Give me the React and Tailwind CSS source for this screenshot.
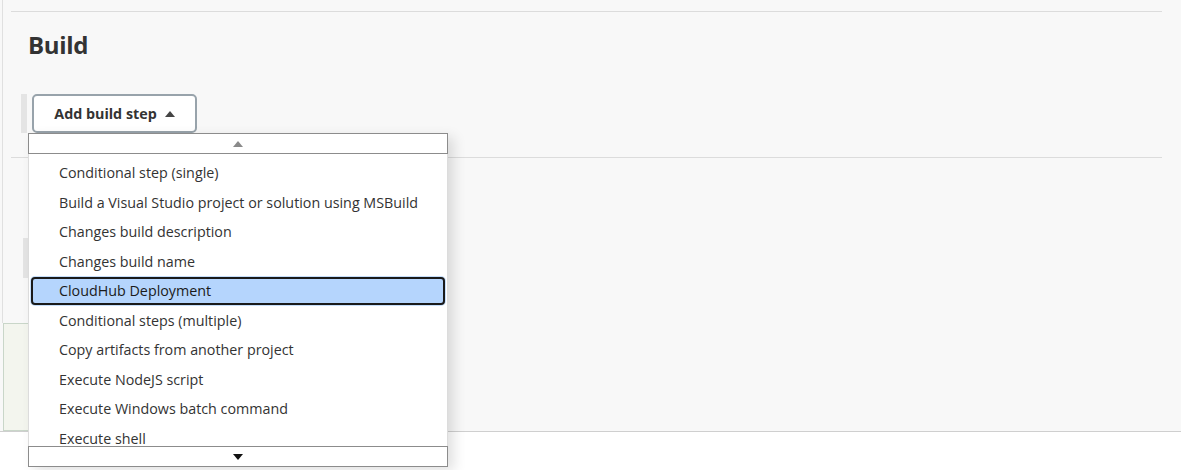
const steps = [
  "Conditional step (single)",
  "Build a Visual Studio project or solution using MSBuild",
  "Changes build description",
  "Changes build name",
  "CloudHub Deployment",
  "Conditional steps (multiple)",
  "Copy artifacts from another project",
  "Execute NodeJS script",
  "Execute Windows batch command",
  "Execute shell",
];

const Caret = ({ down, className }) => (
  <svg width="10" height="6" viewBox="0 0 10 6" className={className}>
    {down ? (
      <path d="M0 0 H10 L5 6 Z" fill="currentColor" />
    ) : (
      <path d="M0 6 H10 L5 0 Z" fill="currentColor" />
    )}
  </svg>
);

const StepMenu = ({ active }) => {
  return (
    <div className="absolute left-[28px] top-[133px] w-[420px] h-[334px] flex flex-col bg-white shadow-[6px_4px_12px_rgba(0,0,0,0.12)]">
      <div className="h-[21px] shrink-0 border border-[#8c8c8c] flex items-center justify-center text-[#8a8a8a]">
        <Caret className="w-[10px] h-[6px]" />
      </div>
      <ul className="flex-1 overflow-hidden border-x border-[#dcdcdc] pt-[4px] px-[1px]">
        {steps.map((s) => (
          <li key={s} className="h-[29.5px] py-[1px] px-[1px]">
            <div
              className={
                s === active
                  ? "h-full flex items-center pl-[26px] rounded-[4px] border-2 border-[#1a1a1a] bg-[#b5d5fd] ring-1 ring-[#c6defa] text-[#1b1b1b]"
                  : "h-full flex items-center pl-[28px] text-[#333]"
              }
            >
              {s}
            </div>
          </li>
        ))}
      </ul>
      <div className="h-[21px] shrink-0 border border-[#8c8c8c] flex items-center justify-center text-[#111]">
        <Caret down className="w-[10px] h-[6px]" />
      </div>
    </div>
  );
};

export default function App() {
  return (
    <div className="relative w-full h-[470px] bg-white overflow-hidden font-['Open_Sans','Liberation_Sans',sans-serif] text-[14.3px] text-[#333]">
      <div className="h-[432px] bg-[#f8f8f8] border-b border-[#cfcfcf] flex flex-col">
        <div className="ml-[2px] border-l border-[#e0e0e0] h-[323px] shrink-0 pl-[8px] pr-[19px] pt-[11px]">
          <div className="border-t border-[#dcdcdc] pl-[17px] pt-[17px] h-[146px]">
            <h2 className="font-bold text-[24px] leading-[32px] text-[#333] tracking-[-0.3px]">
              Build
            </h2>
            <div className="flex mt-[33px] -ml-[7px]">
              <div className="w-[6px] h-[39px] bg-[#e4e4e4]" />
              <button className="ml-[5px] w-[165px] h-[39px] bg-white border-2 border-[#98a3ab] rounded-[5px] flex items-center justify-center gap-[8px] font-bold text-[14.3px] text-[#333]">
                Add build step
                <Caret className="w-[10px] h-[6px] text-[#444]" />
              </button>
            </div>
          </div>
          <div className="border-t border-[#dcdcdc] pl-[12px] pt-[80px]">
            <div className="w-[6px] h-[40px] bg-[#e4e4e4]" />
          </div>
        </div>
        <div className="ml-[3px] w-[400px] flex-1 bg-[#f3f5ee] border border-[#c9d6c9]" />
      </div>
      <StepMenu active="CloudHub Deployment" />
    </div>
  );
}
